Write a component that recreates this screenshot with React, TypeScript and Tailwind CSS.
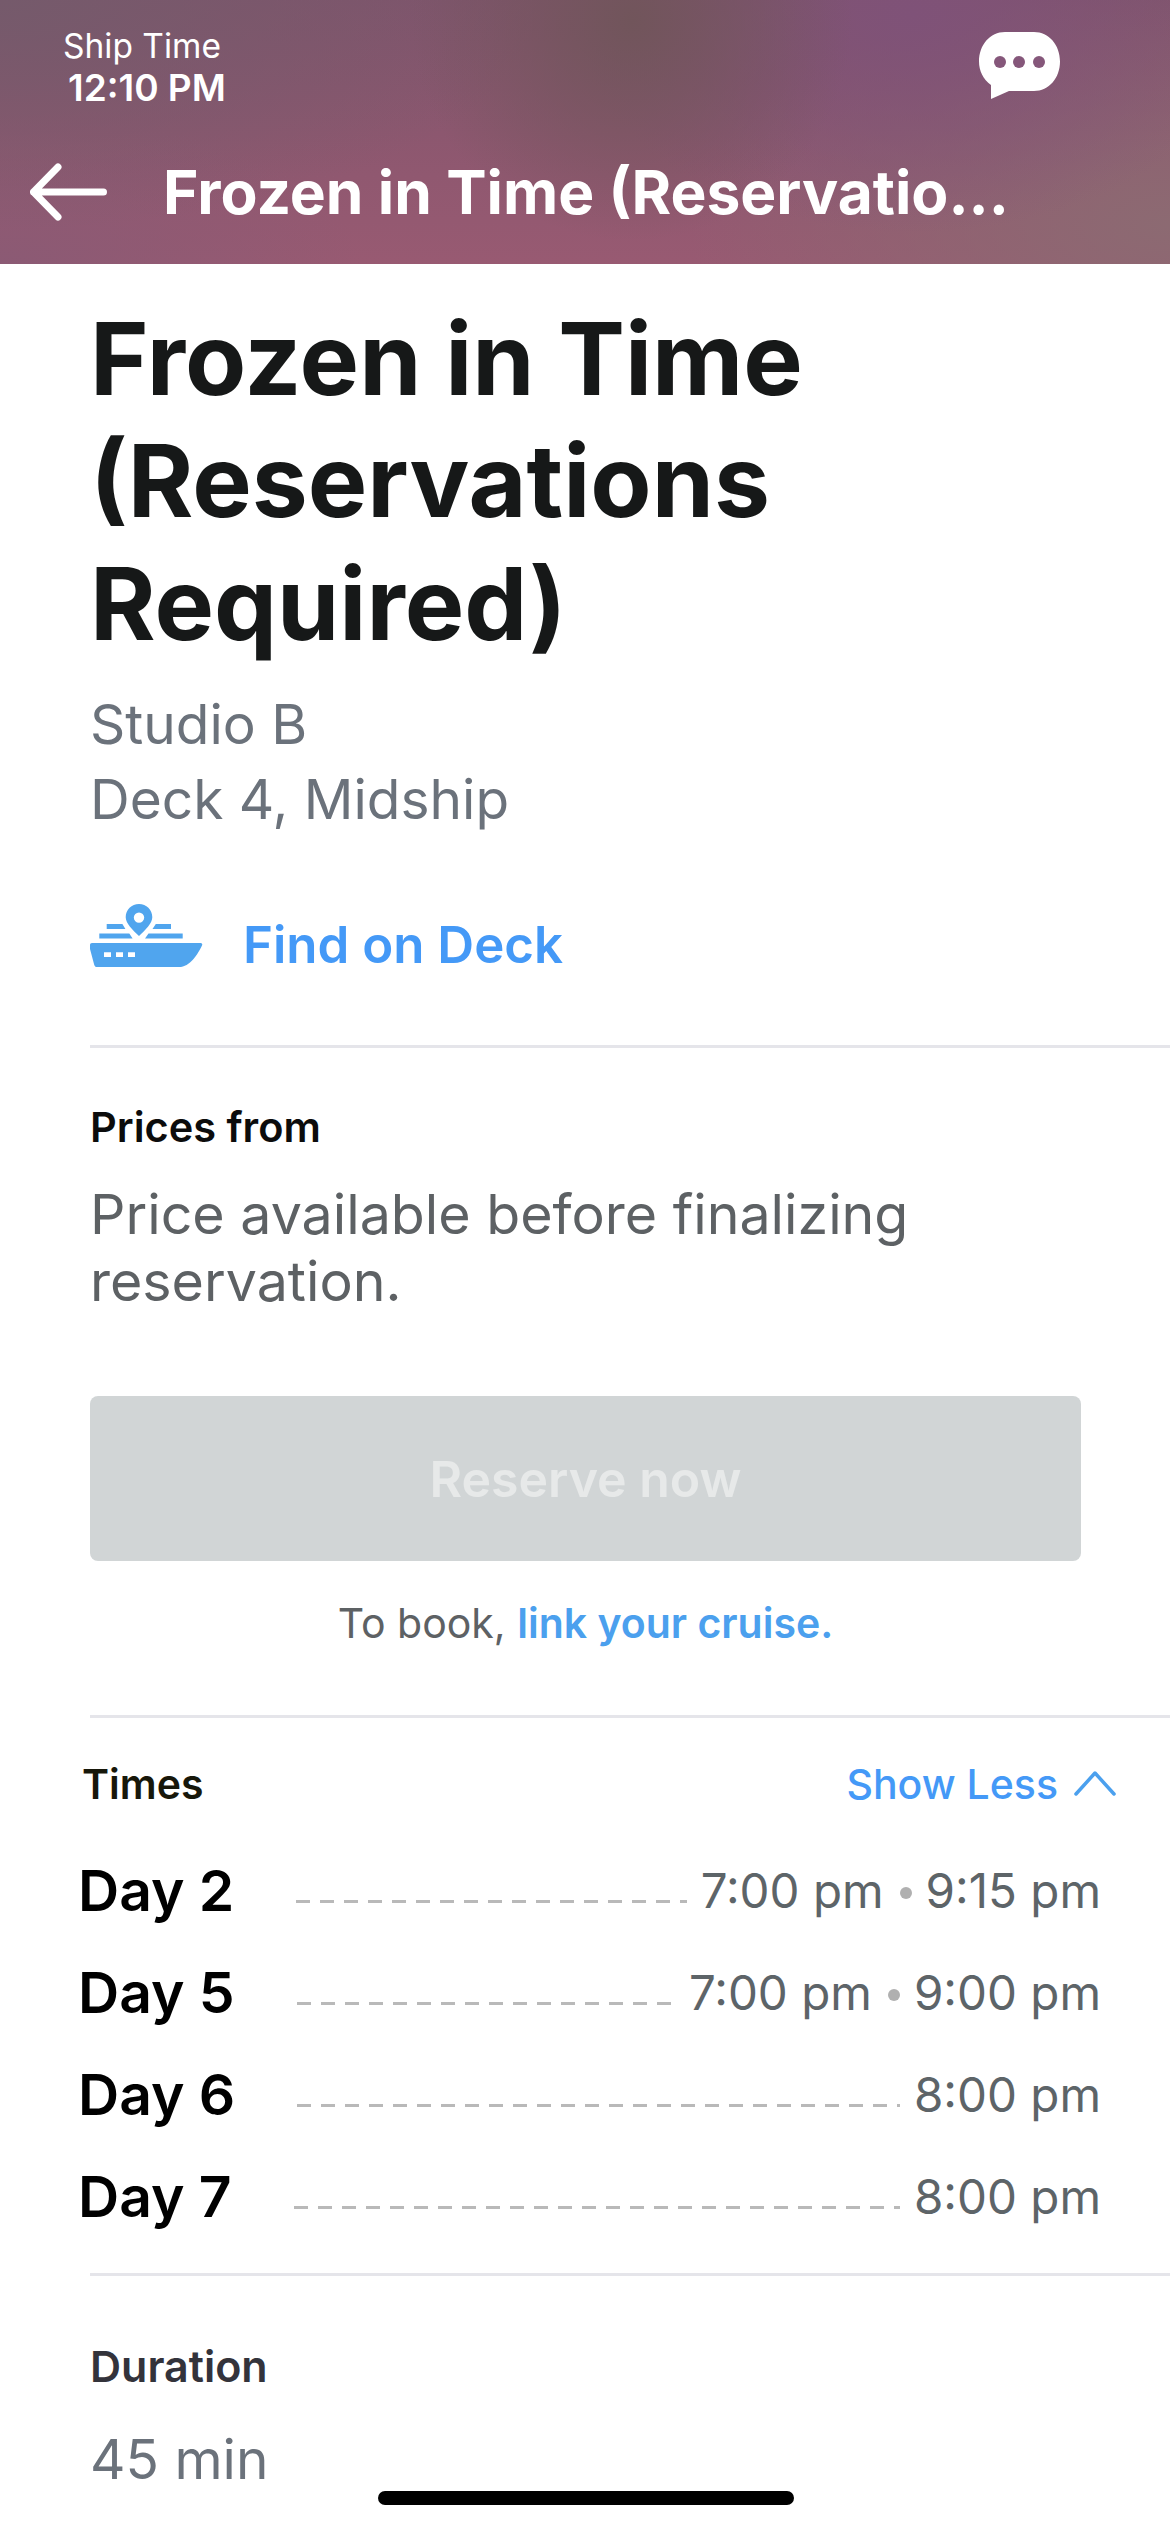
const days = [
  { day: "Day 2", times: ["7:00 pm", "9:15 pm"] },
  { day: "Day 5", times: ["7:00 pm", "9:00 pm"] },
  { day: "Day 6", times: ["8:00 pm"] },
  { day: "Day 7", times: ["8:00 pm"] },
];

function ShipIcon() {
  return (
    <svg viewBox="0 0 113 63" className="w-[113px] h-[63px] shrink-0" fill="#50a5ee">
      <path fillRule="evenodd" d="M49 0c7.400 0 13.300 5.900 13.300 13.300 0 6-7 13-13.300 18.700-6.300-5.700-13.300-12.700-13.300-18.700C35.700 5.900 41.600 0 49 0zm0 8.400a5.200 5.200 0 1 0 0 10.400 5.200 5.200 0 0 0 0-10.400z" />
      <path d="M16.700 20h15.700l3 5H16.700zM65.800 20H81v5H62.500zM9.300 29.500h30l3.300 5H9.300zM58.500 29.500h34.200v5H55z" />
      <path
        fillRule="evenodd"
        d="M2 39h108.500c1.500 0 2.200 1 1.600 2.200C108 50 100 63 89 63H7c-1.500 0-2.300-.8-2.800-2.300L0 45v-4c0-1.200.8-2 2-2zm12 9.300V53h7v-4.700zm12 0V53h7v-4.700zm12 0V53h7v-4.700z"
      />
    </svg>
  );
}

export default function App() {
  return (
    <div className="w-[1170px] h-[2532px] relative overflow-hidden bg-white font-['Inter','Noto_Sans',sans-serif]">
      <header className="h-[264px] px-[30px] pt-[28px] text-white bg-[radial-gradient(ellipse_220px_220px_at_54%_8%,#71555b_0%,transparent_100%),radial-gradient(ellipse_340px_220px_at_78%_5%,#7f5278_0%,transparent_100%),radial-gradient(ellipse_480px_240px_at_100%_85%,#8c6a72_0%,transparent_100%),radial-gradient(ellipse_540px_230px_at_0%_0%,#755a6b_0%,transparent_100%),radial-gradient(ellipse_360px_150px_at_0%_100%,#8b5a74_0%,transparent_100%),linear-gradient(180deg,#80546c_0%,#985a72_100%)]">
        <div className="flex justify-between">
          <div className="pl-[33px]">
            <div className="text-[33.500px] leading-[36px]">Ship Time</div>
            <div className="text-[37px] leading-[42px] font-semibold pl-[5px] pt-[3px]">12:10 PM</div>
          </div>
          <svg viewBox="0 0 81 67" className="w-[81px] h-[67px] mr-[80px] mt-[4px]">
            <path d="M26 0h29c15 0 26 13 26 29.500S70 59 55 59H30L12 67V53C4 47 0 39 0 29.500 0 13 11 0 26 0z" fill="#fff" />
            <circle cx="21" cy="30" r="6" fill="#85577a" />
            <circle cx="40" cy="30" r="6" fill="#85577a" />
            <circle cx="60" cy="30" r="6" fill="#85577a" />
          </svg>
        </div>
        <div className="flex items-center mt-[48px]">
          <svg viewBox="0 0 80 62" className="w-[80px] h-[62px] shrink-0" fill="none" stroke="#fff" strokeWidth="7" strokeLinecap="round" strokeLinejoin="round">
            <path d="M73.500 31H3.500M28 6 3.500 31 28 56" />
          </svg>
          <div className="ml-[53px] text-[60.500px] leading-[70px] font-bold whitespace-nowrap">Frozen in Time (Reservatio...</div>
        </div>
      </header>

      <main className="pl-[90px]">
        <h1 className="mt-[33.500px] text-[100px] leading-[122.500px] font-bold text-[#161818]">
          Frozen in Time
          <br />
          (Reservations
          <br />
          Required)
        </h1>
        <div className="mt-[22px] text-[55px] leading-[75px] text-[#6b727b]">
          <div>Studio B</div>
          <div>Deck 4, Midship</div>
        </div>

        <div className="flex items-start mt-[67px] gap-[40px]">
          <ShipIcon />
          <span className="mt-[11px] text-[51px] leading-[60px] font-semibold text-[#4499f7]">Find on Deck</span>
        </div>
        <div className="h-[3px] bg-[#e5e5ea] mt-[70px]" />

        <div className="mt-[54px] text-[41.500px] leading-[50px] font-semibold text-[#0c0c0c]">Prices from</div>
        <p className="mt-[28px] w-[1000px] text-[55.500px] leading-[67px] text-[#5d6164]">Price available before finalizing reservation.</p>

        <div className="mt-[82px] w-[991px] h-[165px] rounded-[8px] bg-[#d1d5d6] flex items-center justify-center pt-[2px] text-[50px] font-semibold text-[#e7e9e9]">
          Reserve now
        </div>
        <div className="w-[991px] mt-[36px] text-center text-[41px] leading-[52px] text-[#5d6164]">
          To book, <span className="font-semibold text-[#4ba0ee]">link your cruise.</span>
        </div>
        <div className="h-[3px] bg-[#e5e5ea] mt-[66px]" />
      </main>

      <section className="pl-[78px] pr-[69px]">
        <div className="flex justify-between items-center mt-[41px] h-[52px]">
          <span className="pl-[4px] text-[41px] font-semibold text-[#17170a]">Times</span>
          <span className="flex items-center gap-[16px] text-[41px] text-[#4499f7] font-medium">
            Show Less
            <svg viewBox="0 0 42 26" className="w-[42px] h-[26px] -mr-[15px] -mt-[4px]" fill="none" stroke="#4ba0ee" strokeWidth="3.500" strokeLinecap="round" strokeLinejoin="round">
              <path d="M2 24 21 3l19 21" />
            </svg>
          </span>
        </div>
        <div className="mt-[29px]">
          {days.map((row) => (
            <div key={row.day} className="flex items-center h-[102px]">
              <span className="shrink-0 mr-[62px] text-[57px] font-semibold text-black">{row.day}</span>
              <span className="flex-1 mt-[20px] h-[3px] bg-[repeating-linear-gradient(90deg,#b9b9b9_0,#b9b9b9_14px,transparent_14px,transparent_24px)]" />
              <span className="flex items-center pl-[14px] text-[47.500px] text-[#5d6468]">
                {row.times.map((t, i) => (
                  <span key={t} className="flex items-center">
                    {i > 0 && <span className="ml-[16px] mr-[14px] mt-[4px] w-[12px] h-[12px] rounded-full bg-[#b0b0b0]" />}
                    {t}
                  </span>
                ))}
              </span>
            </div>
          ))}
        </div>
      </section>

      <div className="ml-[90px] h-[3px] bg-[#e5e5ea] mt-[25px]" />
      <div className="pl-[90px] mt-[65px] text-[43px] leading-[50px] font-semibold text-[#33333b]">Duration</div>
      <div className="pl-[90px] mt-[34px] text-[55px] leading-[68px] text-[#6b727b]">45 min</div>

      <div className="absolute left-[378px] top-[2491px] w-[416px] h-[14px] rounded-full bg-black" />
    </div>
  );
}
